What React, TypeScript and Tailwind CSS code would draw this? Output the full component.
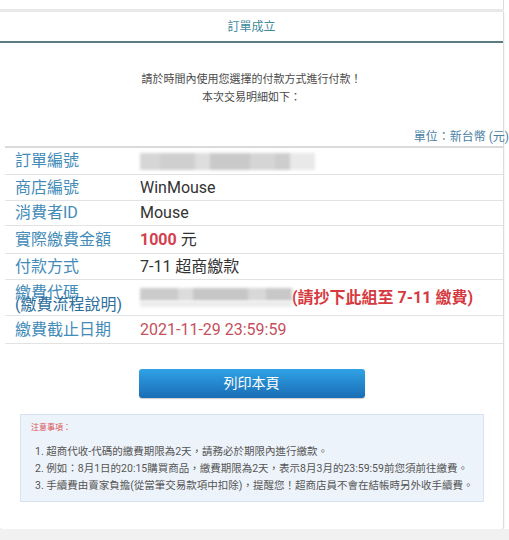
import React from "react";

const font = { fontFamily: 'Roboto, "Noto Sans CJK TC", sans-serif' };

function Blur({ segs, h }: { segs: [number, string][]; h: number }) {
  return (
    <div className="flex blur-[1.5px]" style={{ height: h }}>
      {segs.map(([w, c], i) => (
        <div key={i} style={{ width: w, background: c }} />
      ))}
    </div>
  );
}

export default function App() {
  const rows: { label: React.ReactNode; value: React.ReactNode; h: string }[] = [
    {
      label: "訂單編號",
      h: "h-[27px]",
      value: (
        <Blur
          h={17}
          segs={[
            [20, "#d6d6d6"],
            [35, "#cfcfcf"],
            [15, "#dedede"],
            [40, "#c9c9c9"],
            [25, "#d5d5d5"],
            [15, "#cdcdcd"],
            [25, "#e9e9e9"],
          ]}
        />
      ),
    },
    { label: "商店編號", h: "h-[26px]", value: "WinMouse" },
    { label: "消費者ID", h: "h-[25px]", value: "Mouse" },
    {
      label: "實際繳費金額",
      h: "h-[28px]",
      value: (
        <span>
          <span className="font-bold text-[#d5404d]">1000</span> 元
        </span>
      ),
    },
    { label: "付款方式", h: "h-[26px]", value: "7-11 超商繳款" },
    {
      label: (
        <div className="leading-[12px] pt-[2px]">
          <div>繳費代碼</div>
          <div className="text-[#2e6f9e]">(繳費流程說明)</div>
        </div>
      ),
      h: "h-[36px]",
      value: (
        <div className="flex items-center">
          <div className="flex flex-col w-[152px]">
            <Blur
              h={13}
              segs={[
                [38, "#cbcbcb"],
                [15, "#dcdcdc"],
                [55, "#c6c6c6"],
                [18, "#d8d8d8"],
                [26, "#c8c8c8"],
              ]}
            />
            <Blur h={6} segs={[[152, "#ececec"]]} />
          </div>
          <span className="font-bold text-[#d63a40]">(請抄下此組至 7-11 繳費)</span>
        </div>
      ),
    },
    {
      label: "繳費截止日期",
      h: "h-[28px]",
      value: <span className="text-[#c4505c]">2021-11-29 23:59:59</span>,
    },
  ];

  return (
    <div className="w-[509px] h-[540px] bg-white overflow-hidden" style={font}>
      <div className="w-[504px] h-[9px] border-r border-[#dcdcdc] bg-white" />
      <div className="w-[504px] h-[3px] bg-[#e9e9e9]" />
      <div className="w-[504px] bg-white border-r border-[#dcdcdc] rounded-b-[3px] shadow-[0_1px_2px_rgba(0,0,0,0.12)] pb-[27px]">
        <div className="h-[31px] border-b-2 border-[#587c82] flex items-center justify-center text-[12px] text-[#3f8a9c]">
          訂單成立
        </div>
        <div className="pt-[28px] text-center text-[11px] leading-[18px] text-[#4a4a4a]">
          <div>請於時間內使用您選擇的付款方式進行付款！</div>
          <div>本次交易明細如下：</div>
        </div>
        <div className="mt-[22px] text-right text-[12px] leading-[16px] text-[#4b7fa3] whitespace-nowrap -mr-[6px]">
          單位：新台幣 (元)
        </div>
        <div className="mt-[1px] ml-[5px] border-t-2 border-[#dadada]">
          {rows.map((r, i) => (
            <div
              key={i}
              className={`flex items-center ${r.h} border-b border-[#e2e2e2] text-[16px]`}
            >
              <div className="w-[135px] pl-[10px] text-[#438bb9] whitespace-nowrap">{r.label}</div>
              <div className="text-[#333] whitespace-nowrap">{r.value}</div>
            </div>
          ))}
        </div>
        <div className="mt-[25px] flex justify-center">
          <div className="w-[226px] h-[29px] rounded-[3px] bg-gradient-to-b from-[#31a2e6] to-[#1a6db5] flex items-center justify-center text-white text-[14px] shadow-[0_1px_1px_rgba(0,0,0,0.2)]">
            列印本頁
          </div>
        </div>
        <div className="mt-[16px] ml-[20px] mr-[19px] bg-[#edf3fa] border border-[#d7e3ee] pt-[7px] pb-[7px] pl-[10px]">
          <div className="text-[8px] leading-[12px] text-[#d9555a]">注意事項：</div>
          <div className="mt-[9px] pl-[4px] text-[10.5px] leading-[17px] text-[#555] whitespace-nowrap">
            <div>1. 超商代收-代碼的繳費期限為2天，請務必於期限內進行繳款。</div>
            <div>2. 例如：8月1日的20:15購買商品，繳費期限為2天，表示8月3月的23:59:59前您須前往繳費。</div>
            <div>3. 手續費由賣家負擔(從當筆交易款項中扣除)，提醒您！超商店員不會在結帳時另外收手續費。</div>
          </div>
        </div>
      </div>
      <div className="h-[20px] bg-[#f1f1f1]" />
    </div>
  );
}
